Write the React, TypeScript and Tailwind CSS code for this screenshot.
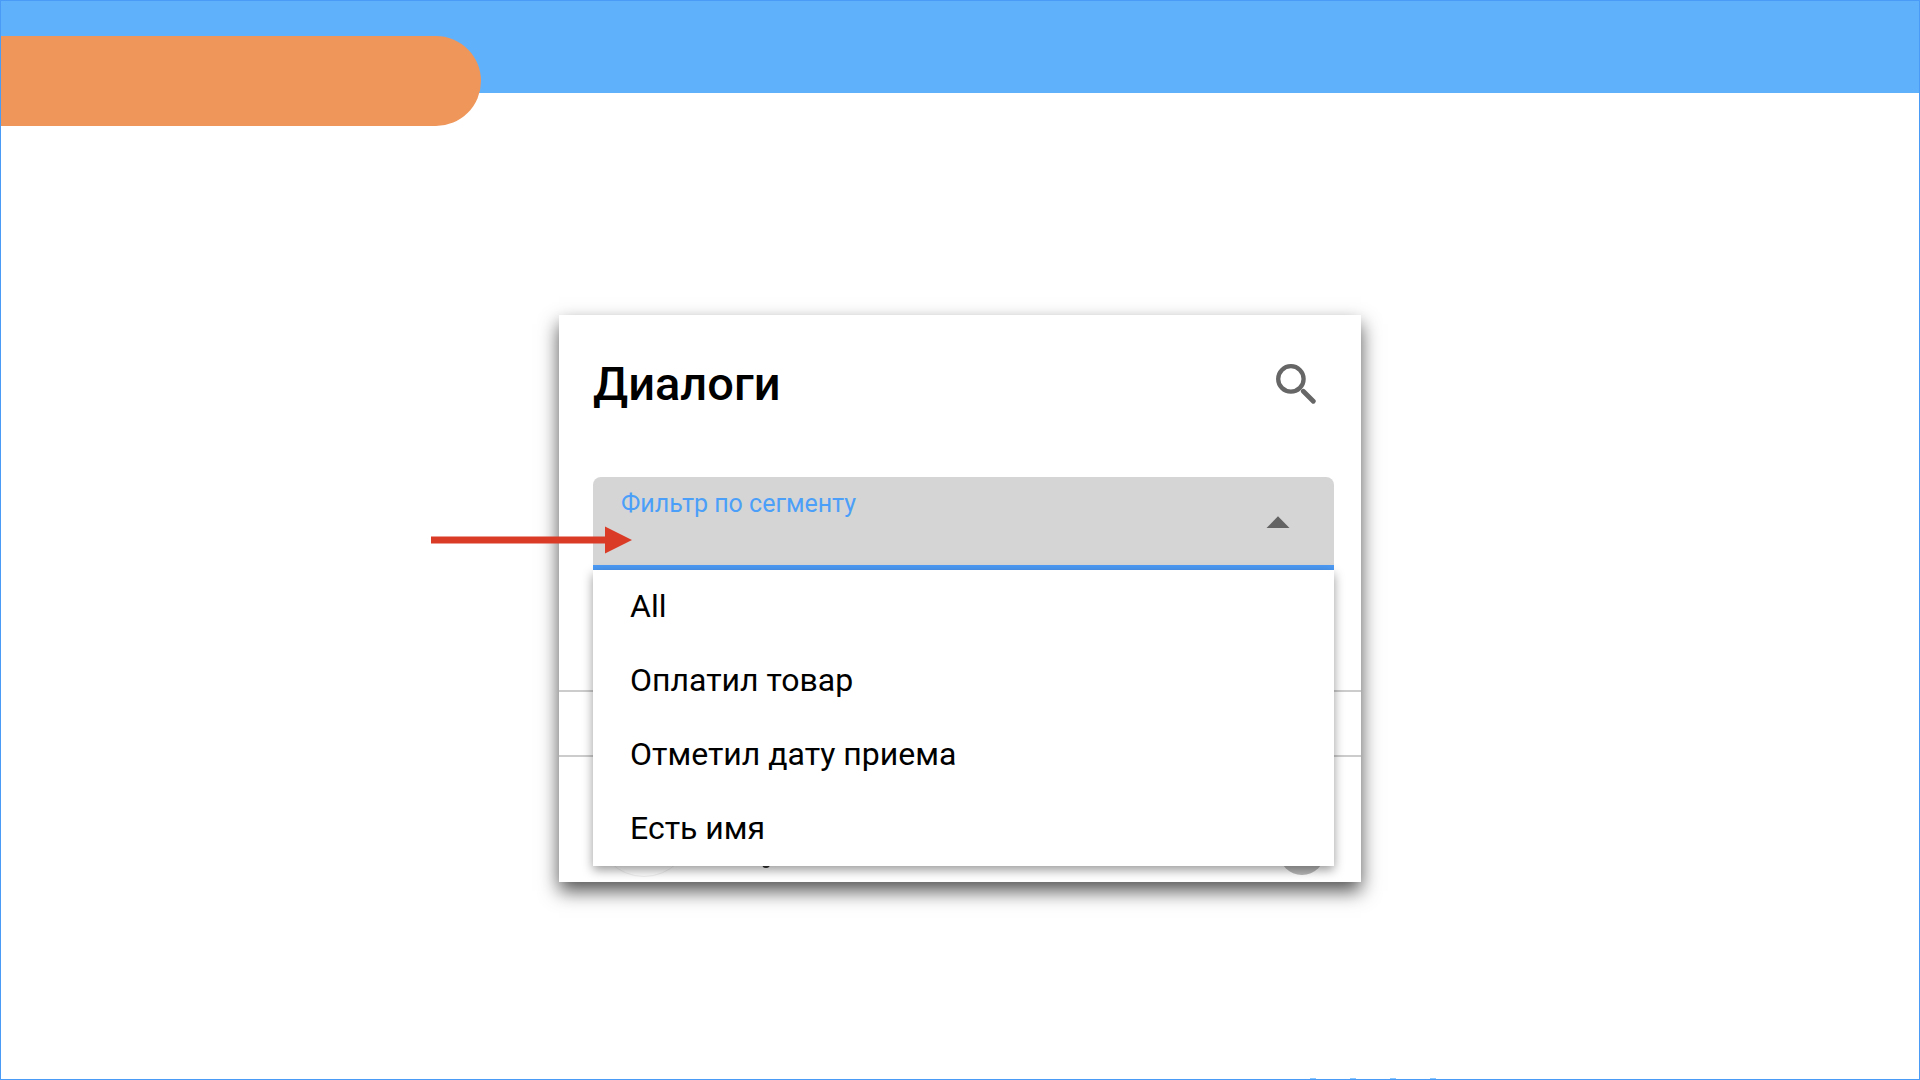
import React, { useState } from "react";

const segments = ["All", "Оплатил товар", "Отметил дату приема", "Есть имя"];

function SearchIcon() {
  return (
    <svg viewBox="0 0 40 40" className="h-10 w-10" fill="none" stroke="#666666" aria-hidden="true">
      <circle cx="14.9" cy="14.9" r="12.7" strokeWidth="4.3" />
      <path d="M27.3 27.2L37.3 37.2" strokeWidth="4.8" strokeLinecap="round" />
    </svg>
  );
}

function PointerArrow() {
  return (
    <svg
      viewBox="0 0 201 28"
      className="pointer-events-none absolute -left-32 top-[211px] h-7 w-[201px]"
      fill="#da3b26"
      aria-hidden="true"
    >
      <path d="M0 10.5H174V0.5L201 14L174 27.5V17.5H0Z" />
    </svg>
  );
}

function SegmentFilter() {
  const [open, setOpen] = useState(true);
  return (
    <div className="relative">
      <button
        type="button"
        aria-haspopup="listbox"
        aria-expanded={open}
        onClick={() => setOpen(!open)}
        className="flex h-[93px] w-full items-start justify-between rounded-t-lg border-b-[5px] border-[#4c9af5] bg-[#d5d5d5] pl-7 pr-11 text-left"
      >
        <span className="mt-[11px] text-[25px] leading-8 text-[#4c9ff8]">Фильтр по сегменту</span>
        <svg viewBox="0 0 24 12" className="mt-[39px] h-3 w-6" fill="#636363" aria-hidden="true">
          <path d="M0.5 12L12 0.3L23.5 12Z" />
        </svg>
      </button>
      {open && (
        <ul
          role="listbox"
          aria-label="Фильтр по сегменту"
          className="absolute inset-x-0 top-full z-10 bg-white shadow-[0_4px_10px_rgba(0,0,0,0.4)]"
        >
          {segments.map((name) => (
            <li key={name} role="option" aria-selected={false}>
              <button type="button" className="block w-full px-[37px] pb-0.5 text-left text-[32px] leading-[72px] text-black">
                {name}
              </button>
            </li>
          ))}
        </ul>
      )}
    </div>
  );
}

function DialogsCard() {
  return (
    <section className="relative w-full max-w-[802px]">
      <div className="bg-white pt-[39px] shadow-[0_9px_18px_rgba(0,0,0,0.68)]">
        <div className="pl-[34px] pr-[27px]">
          <div className="flex h-[60px] items-center justify-between pr-[18px]">
            <h1 className="text-[47px] font-medium leading-[60px] text-black">Диалоги</h1>
            <button type="button" aria-label="Поиск">
              <SearchIcon />
            </button>
          </div>
          <div className="mt-[63px]">
            <SegmentFilter />
          </div>
        </div>
        <div className="mt-[120px] h-[67px] border-y-2 border-[#cccccc]" />
        <div className="flex h-[125px] justify-between pb-[5px] pl-[37px] pr-9">
          <div className="flex items-end">
            <div className="h-24 w-24 rounded-full border border-[#f0f0f0]" />
            <div className="mb-[9px] ml-[70px] h-2 w-2 rounded-full bg-[#333333]" />
          </div>
          <div className="mb-0.5 h-[46px] w-[46px] self-end rounded-full bg-[#b9b9b9]" />
        </div>
      </div>
      <PointerArrow />
    </section>
  );
}

export default function App() {
  return (
    <div className="flex min-h-screen flex-col overflow-hidden border border-[#4a9bf5] bg-white font-['Roboto',sans-serif]">
      <header className="h-[92px] bg-[#5fb1fb] pt-[35px]">
        <div className="h-[90px] w-1/4 rounded-r-full bg-[#ef965b]" />
      </header>
      <main className="flex flex-1 items-start justify-center pt-[222px]">
        <DialogsCard />
      </main>
      <footer className="flex h-px justify-end gap-[34px] pr-[483px]" aria-hidden="true">
        <span className="w-1.5 bg-[#8ac6fc]" />
        <span className="w-1.5 bg-[#8ac6fc]" />
        <span className="w-1.5 bg-[#8ac6fc]" />
        <span className="w-1.5 bg-[#8ac6fc]" />
      </footer>
    </div>
  );
}
